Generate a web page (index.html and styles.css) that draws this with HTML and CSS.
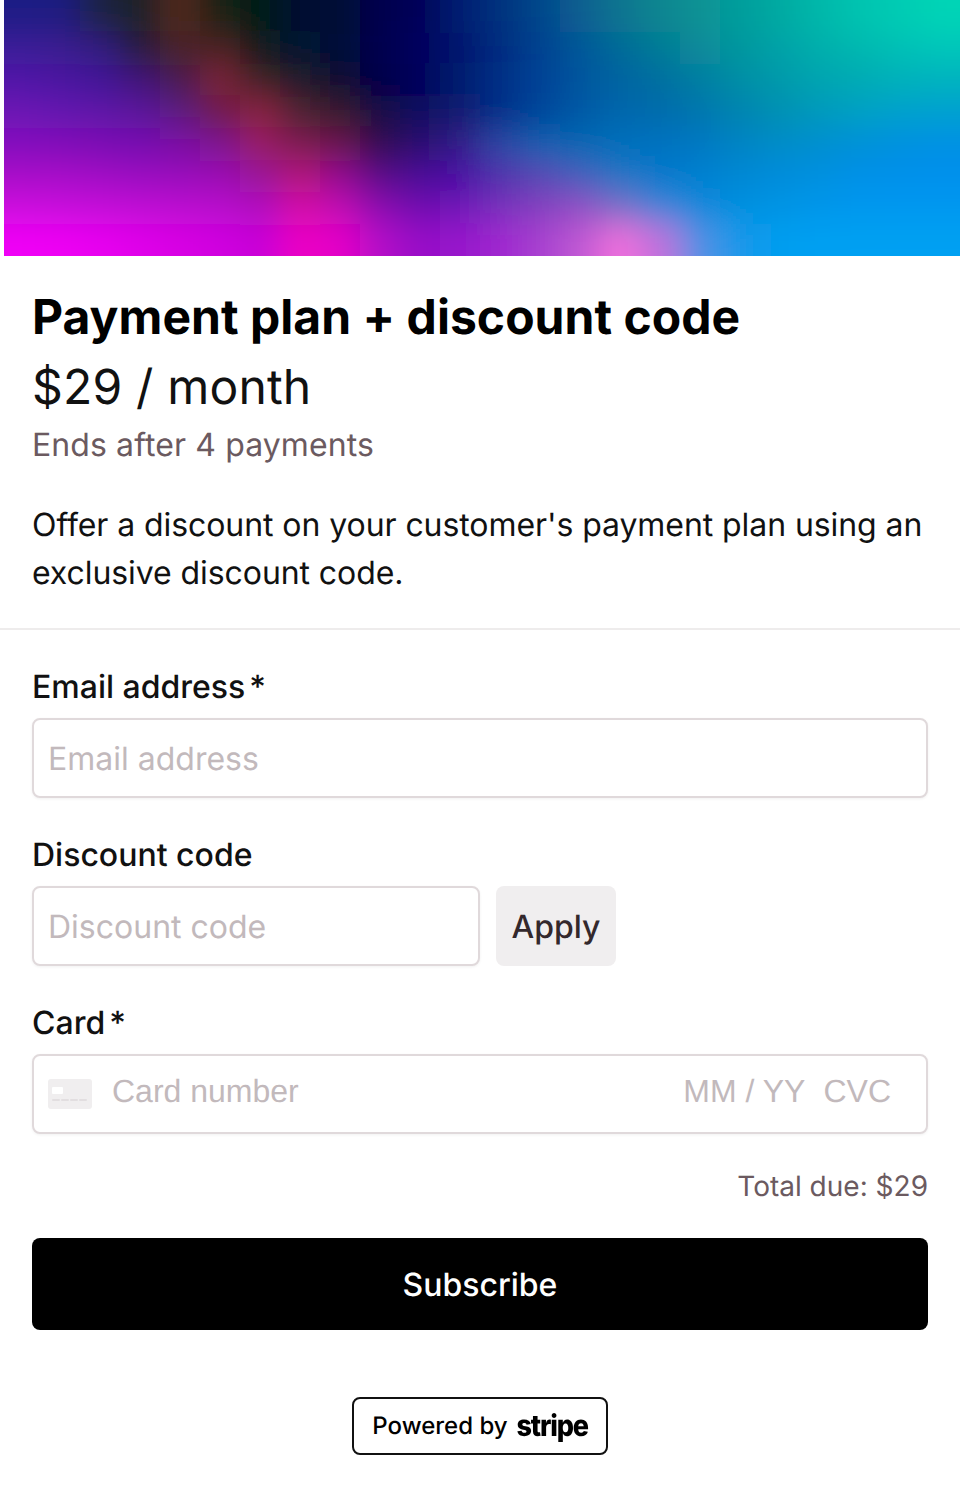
FILE: index.html
```html
<!DOCTYPE html>
<html lang="en">
<head>
<meta charset="utf-8">
<title>Payment plan + discount code</title>
<link rel="stylesheet" href="styles.css">
</head>
<body>
<header class="hero">
<svg class="hero-art" viewBox="4 0 956 256" aria-hidden="true">
<defs>
<filter id="mesh" filterUnits="userSpaceOnUse" x="-100" y="-100" width="1160" height="456"><feGaussianBlur stdDeviation="16"/></filter>
</defs>
<g filter="url(#mesh)" shape-rendering="crispEdges">
<g transform="translate(0 0)">
<rect x="-60" y="-64" width="100" height="96" fill="#1f1a85"/><rect x="40" y="-64" width="40" height="96" fill="#1e1a80"/><rect x="80" y="-64" width="40" height="96" fill="#1e2040"/><rect x="120" y="-64" width="40" height="96" fill="#1c2028"/><rect x="160" y="-64" width="40" height="96" fill="#50261a"/><rect x="200" y="-64" width="40" height="96" fill="#142016"/><rect x="240" y="-64" width="40" height="96" fill="#041c14"/><rect x="280" y="-64" width="40" height="96" fill="#011030"/><rect x="320" y="-64" width="40" height="96" fill="#000c36"/><rect x="360" y="-64" width="40" height="96" fill="#00004e"/><rect x="400" y="-64" width="40" height="96" fill="#000058"/><rect x="440" y="-64" width="40" height="96" fill="#001e72"/><rect x="480" y="-64" width="40" height="96" fill="#00307e"/><rect x="520" y="-64" width="40" height="96" fill="#06468c"/><rect x="560" y="-64" width="40" height="96" fill="#0a5e90"/><rect x="600" y="-64" width="40" height="96" fill="#0a7490"/><rect x="640" y="-64" width="40" height="96" fill="#0a8690"/><rect x="680" y="-64" width="40" height="96" fill="#089294"/><rect x="720" y="-64" width="40" height="96" fill="#069e9c"/><rect x="760" y="-64" width="40" height="96" fill="#04aaa2"/><rect x="800" y="-64" width="40" height="96" fill="#02b8aa"/><rect x="840" y="-64" width="40" height="96" fill="#00c4b0"/><rect x="880" y="-64" width="40" height="96" fill="#00ccb4"/><rect x="920" y="-64" width="100" height="96" fill="#00d4b6"/>
</g>
<g transform="translate(0 32)">
<rect x="-60" width="100" height="32" fill="#3a1a98"/><rect x="40" width="40" height="32" fill="#3a1a90"/><rect x="80" width="40" height="32" fill="#301a80"/><rect x="120" width="40" height="32" fill="#281e38"/><rect x="160" width="40" height="32" fill="#4c2428"/><rect x="200" width="40" height="32" fill="#4a2420"/><rect x="240" width="40" height="32" fill="#0e1c1c"/><rect x="280" width="40" height="32" fill="#021432"/><rect x="320" width="40" height="32" fill="#000a38"/><rect x="360" width="40" height="32" fill="#000050"/><rect x="400" width="40" height="32" fill="#00005e"/><rect x="440" width="40" height="32" fill="#00186e"/><rect x="480" width="40" height="32" fill="#002c80"/><rect x="520" width="40" height="32" fill="#004090"/><rect x="560" width="40" height="32" fill="#06569a"/><rect x="600" width="40" height="32" fill="#066a98"/><rect x="640" width="40" height="32" fill="#067c96"/><rect x="680" width="40" height="32" fill="#088a9a"/><rect x="720" width="40" height="32" fill="#04969e"/><rect x="760" width="40" height="32" fill="#04a2a8"/><rect x="800" width="40" height="32" fill="#02aeac"/><rect x="840" width="40" height="32" fill="#02b8b0"/><rect x="880" width="40" height="32" fill="#00c0b6"/><rect x="920" width="100" height="32" fill="#00c6ba"/>
</g>
<g transform="translate(0 64)">
<rect x="-60" width="100" height="32" fill="#5014a8"/><rect x="40" width="40" height="32" fill="#4a18a0"/><rect x="80" width="40" height="32" fill="#401898"/><rect x="120" width="40" height="32" fill="#401878"/><rect x="160" width="40" height="32" fill="#4a1f4c"/><rect x="200" width="40" height="32" fill="#7c2038"/><rect x="240" width="40" height="32" fill="#3a2228"/><rect x="280" width="40" height="32" fill="#1a1c2c"/><rect x="320" width="40" height="32" fill="#081030"/><rect x="360" width="40" height="32" fill="#000048"/><rect x="400" width="40" height="32" fill="#00005a"/><rect x="440" width="40" height="32" fill="#001a70"/><rect x="480" width="40" height="32" fill="#002e86"/><rect x="520" width="40" height="32" fill="#004296"/><rect x="560" width="40" height="32" fill="#00549e"/><rect x="600" width="40" height="32" fill="#0464a2"/><rect x="640" width="40" height="32" fill="#046ea0"/><rect x="680" width="40" height="32" fill="#047ea2"/><rect x="720" width="40" height="32" fill="#048ea6"/><rect x="760" width="40" height="32" fill="#029aaa"/><rect x="800" width="40" height="32" fill="#02a4b0"/><rect x="840" width="40" height="32" fill="#02aab4"/><rect x="880" width="40" height="32" fill="#00b0ba"/><rect x="920" width="100" height="32" fill="#00b2be"/>
</g>
<g transform="translate(0 96)">
<rect x="-60" width="100" height="32" fill="#6c14b4"/><rect x="40" width="40" height="32" fill="#6414b0"/><rect x="80" width="40" height="32" fill="#5e14a8"/><rect x="120" width="40" height="32" fill="#5a189c"/><rect x="160" width="40" height="32" fill="#5c1a80"/><rect x="200" width="40" height="32" fill="#701c44"/><rect x="240" width="40" height="32" fill="#8a2040"/><rect x="280" width="40" height="32" fill="#4c2030"/><rect x="320" width="40" height="32" fill="#341c2c"/><rect x="360" width="40" height="32" fill="#140c44"/><rect x="400" width="40" height="32" fill="#0c0a60"/><rect x="440" width="40" height="32" fill="#0c1a70"/><rect x="480" width="40" height="32" fill="#002e88"/><rect x="520" width="40" height="32" fill="#00449a"/><rect x="560" width="40" height="32" fill="#0058a6"/><rect x="600" width="40" height="32" fill="#0066ac"/><rect x="640" width="40" height="32" fill="#026cac"/><rect x="680" width="40" height="32" fill="#0276ae"/><rect x="720" width="40" height="32" fill="#0284b0"/><rect x="760" width="40" height="32" fill="#0290b4"/><rect x="800" width="40" height="32" fill="#029abc"/><rect x="840" width="40" height="32" fill="#02a0c4"/><rect x="880" width="40" height="32" fill="#00a0cc"/><rect x="920" width="100" height="32" fill="#00a0d0"/>
</g>
<g transform="translate(0 128)">
<rect x="-60" width="100" height="32" fill="#8210be"/><rect x="40" width="40" height="32" fill="#8010b8"/><rect x="80" width="40" height="32" fill="#7a10b4"/><rect x="120" width="40" height="32" fill="#7410b0"/><rect x="160" width="40" height="32" fill="#7a10a4"/><rect x="200" width="40" height="32" fill="#7c1490"/><rect x="240" width="40" height="32" fill="#9a1a60"/><rect x="280" width="40" height="32" fill="#7c1c50"/><rect x="320" width="40" height="32" fill="#681848"/><rect x="360" width="40" height="32" fill="#300c50"/><rect x="400" width="40" height="32" fill="#2a1070"/><rect x="440" width="40" height="32" fill="#301c88"/><rect x="480" width="40" height="32" fill="#2a4aa4"/><rect x="520" width="40" height="32" fill="#1060b0"/><rect x="560" width="40" height="32" fill="#0068b4"/><rect x="600" width="40" height="32" fill="#0070bc"/><rect x="640" width="40" height="32" fill="#0272c0"/><rect x="680" width="40" height="32" fill="#0278c2"/><rect x="720" width="40" height="32" fill="#0284c4"/><rect x="760" width="40" height="32" fill="#028cc8"/><rect x="800" width="40" height="32" fill="#028ed0"/><rect x="840" width="40" height="32" fill="#0090d8"/><rect x="880" width="40" height="32" fill="#0090e0"/><rect x="920" width="100" height="32" fill="#0090e4"/>
</g>
<g transform="translate(0 160)">
<rect x="-60" width="100" height="32" fill="#a80cc8"/><rect x="40" width="40" height="32" fill="#a60cc8"/><rect x="80" width="40" height="32" fill="#a00cc4"/><rect x="120" width="40" height="32" fill="#9a0cc0"/><rect x="160" width="40" height="32" fill="#980cbc"/><rect x="200" width="40" height="32" fill="#9a0eb4"/><rect x="240" width="40" height="32" fill="#981298"/><rect x="280" width="40" height="32" fill="#b41478"/><rect x="320" width="40" height="32" fill="#901090"/><rect x="360" width="40" height="32" fill="#580c88"/><rect x="400" width="40" height="32" fill="#4a0e98"/><rect x="440" width="40" height="32" fill="#4810a4"/><rect x="480" width="40" height="32" fill="#5030ac"/><rect x="520" width="40" height="32" fill="#5448b4"/><rect x="560" width="40" height="32" fill="#4060bc"/><rect x="600" width="40" height="32" fill="#1a74c4"/><rect x="640" width="40" height="32" fill="#0078cc"/><rect x="680" width="40" height="32" fill="#0280d0"/><rect x="720" width="40" height="32" fill="#0288d4"/><rect x="760" width="40" height="32" fill="#028cdc"/><rect x="800" width="40" height="32" fill="#0090e0"/><rect x="840" width="40" height="32" fill="#0090e8"/><rect x="880" width="40" height="32" fill="#0090ea"/><rect x="920" width="100" height="32" fill="#0090ec"/>
</g>
<g transform="translate(0 192)">
<rect x="-60" width="100" height="32" fill="#cc08de"/><rect x="40" width="40" height="32" fill="#c808dc"/><rect x="80" width="40" height="32" fill="#c408d8"/><rect x="120" width="40" height="32" fill="#c008d4"/><rect x="160" width="40" height="32" fill="#bc08d0"/><rect x="200" width="40" height="32" fill="#b808cc"/><rect x="240" width="40" height="32" fill="#b00cc0"/><rect x="280" width="40" height="32" fill="#d40ca8"/><rect x="320" width="40" height="32" fill="#c00cb4"/><rect x="360" width="40" height="32" fill="#8a0cb0"/><rect x="400" width="40" height="32" fill="#700cb0"/><rect x="440" width="40" height="32" fill="#7018b8"/><rect x="480" width="40" height="32" fill="#7830bc"/><rect x="520" width="40" height="32" fill="#8440c0"/><rect x="560" width="40" height="32" fill="#9050c4"/><rect x="600" width="40" height="32" fill="#7470c8"/><rect x="640" width="40" height="32" fill="#3a84d8"/><rect x="680" width="40" height="32" fill="#0a88dc"/><rect x="720" width="40" height="32" fill="#0090e0"/><rect x="760" width="40" height="32" fill="#0094e4"/><rect x="800" width="40" height="32" fill="#0096ea"/><rect x="840" width="40" height="32" fill="#0098ee"/><rect x="880" width="40" height="32" fill="#0098f0"/><rect x="920" width="100" height="32" fill="#0098f0"/>
</g>
<g transform="translate(0 224)">
<rect x="-60" width="100" height="96" fill="#f000f6"/><rect x="40" width="40" height="96" fill="#ee00f4"/><rect x="80" width="40" height="96" fill="#e800f0"/><rect x="120" width="40" height="96" fill="#e000ea"/><rect x="160" width="40" height="96" fill="#d800e4"/><rect x="200" width="40" height="96" fill="#d000e0"/><rect x="240" width="40" height="96" fill="#c800d8"/><rect x="280" width="40" height="96" fill="#ec00c4"/><rect x="320" width="40" height="96" fill="#e400c8"/><rect x="360" width="40" height="96" fill="#b408c8"/><rect x="400" width="40" height="96" fill="#9808c8"/><rect x="440" width="40" height="96" fill="#9814cc"/><rect x="480" width="40" height="96" fill="#a028d0"/><rect x="520" width="40" height="96" fill="#a840d0"/><rect x="560" width="40" height="96" fill="#c058d4"/><rect x="600" width="40" height="96" fill="#f070dc"/><rect x="640" width="40" height="96" fill="#c070dc"/><rect x="680" width="40" height="96" fill="#5090e4"/><rect x="720" width="40" height="96" fill="#1498ea"/><rect x="760" width="40" height="96" fill="#009ef0"/><rect x="800" width="40" height="96" fill="#00a0f2"/><rect x="840" width="40" height="96" fill="#00a0f2"/><rect x="880" width="40" height="96" fill="#00a0f2"/><rect x="920" width="100" height="96" fill="#00a0f2"/>
</g>
</g>
</svg>
</header>
<main class="content">
<section class="summary">
<h1 class="title">Payment plan + discount code</h1>
<p class="price">$29 / month</p>
<p class="terms">Ends after 4 payments</p>
<p class="desc">Offer a discount on your customer's payment plan using an exclusive discount code.</p>
</section>
<form class="form">
<div class="field">
<label class="label" for="email">Email address<span class="req">*</span></label>
<input class="input" id="email" type="text" placeholder="Email address">
</div>
<div class="field">
<label class="label" for="code">Discount code</label>
<div class="code-row">
<input class="input code-input" id="code" type="text" placeholder="Discount code">
<button class="apply" type="button">Apply</button>
</div>
</div>
<div class="field">
<label class="label">Card<span class="req">*</span></label>
<div class="input card">
<svg class="card-icon" viewBox="0 0 44 30" aria-hidden="true">
<rect width="44" height="30" rx="3" fill="#f0eeef"/>
<rect x="4" y="8" width="11" height="7" rx="1" fill="#fff"/>
<path d="M5 21h6M14 21h6M23 21h6M32 21h6" stroke="#e2dee0" stroke-width="2" stroke-linecap="round"/>
</svg>
<span class="card-num">Card number</span>
<span class="card-exp">MM / YY</span>
<span class="card-cvc">CVC</span>
</div>
</div>
<p class="total">Total due: $29</p>
<button class="submit" type="button">Subscribe</button>
</form>
<footer class="foot">
<div class="powered"><span>Powered by</span><b class="stripe">stripe</b></div>
</footer>
</main>
</body>
</html>
```
FILE: styles.css
```css
* { box-sizing: border-box; }
html, body { margin: 0; padding: 0; background: #fff; }
body { font-family: Inter, "Liberation Sans", sans-serif; color: #000; width: 960px; text-rendering: geometricPrecision; }
p, h1 { margin: 0; }
.hero { height: 256px; padding-left: 4px; background: #fff; }
.hero-art { display: block; width: 956px; height: 256px; }
.summary { padding: 31px 32px 31px; border-bottom: 2px solid #eeecec; }
.title { font-size: 48px; line-height: 60px; font-weight: 700; letter-spacing: .04px; }
.price { font-size: 48px; line-height: 72px; margin-top: 4px; color: #111; letter-spacing: .18px; }
.terms { font-size: 32px; line-height: 44px; color: #6b5a60; letter-spacing: .1px; }
.desc { font-size: 32px; line-height: 48px; margin-top: 34px; color: #111; letter-spacing: -.075px; }
.form { padding: 32px 32px 0; display: flex; flex-direction: column; }
.field { margin-bottom: 32px; }
.label { display: block; font-size: 32px; line-height: 48px; padding-top: 1px; font-weight: 500; color: #111; margin-bottom: 7px; }
.req { margin-left: 4px; }
.input { display: block; width: 100%; height: 80px; border: 2px solid #e0d9db; border-radius: 8px; padding: 0 14px; font: 400 32px Inter, sans-serif; text-rendering: geometricPrecision; background: #fff; box-shadow: 0 1px 3px rgba(0,0,0,.06); outline: none; }
.input::placeholder { color: #c2b9bc; opacity: 1; }
.code-row { display: flex; gap: 16px; }
.code-input { width: 448px; flex: none; }
.apply { width: 120px; height: 80px; border: 0; border-radius: 8px; background: #f0eeef; color: #33282c; font: 500 32px Inter, sans-serif; text-rendering: geometricPrecision; padding: 0; }
.card { display: flex; align-items: center; padding-bottom: 5px; font-family: "Liberation Sans", sans-serif; color: #c2b9bc; }
.card-icon { width: 44px; height: 30px; flex: none; margin-top: 4px; }
.card-num { margin-left: 20px; flex: 1; }
.card-exp { margin-right: 18px; }
.card-cvc { margin-right: 21px; }
.total { font-size: 28px; line-height: 40px; text-align: right; color: #6b5a60; }
.submit { margin-top: 32px; height: 92px; border: 0; border-radius: 8px; background: #000; color: #fff; font: 500 32px Inter, sans-serif; text-rendering: geometricPrecision; }
.foot { display: flex; justify-content: center; padding-top: 67px; }
.powered { width: 256px; height: 58px; padding-bottom: 2px; border: 2px solid #111; border-radius: 8px; display: flex; align-items: center; justify-content: center; gap: 9px; font-size: 24px; font-weight: 500; }
.stripe { font-family: Inter, sans-serif; font-size: 27px; font-weight: 800; letter-spacing: -1.2px; transform: scaleY(1.1); }
```
